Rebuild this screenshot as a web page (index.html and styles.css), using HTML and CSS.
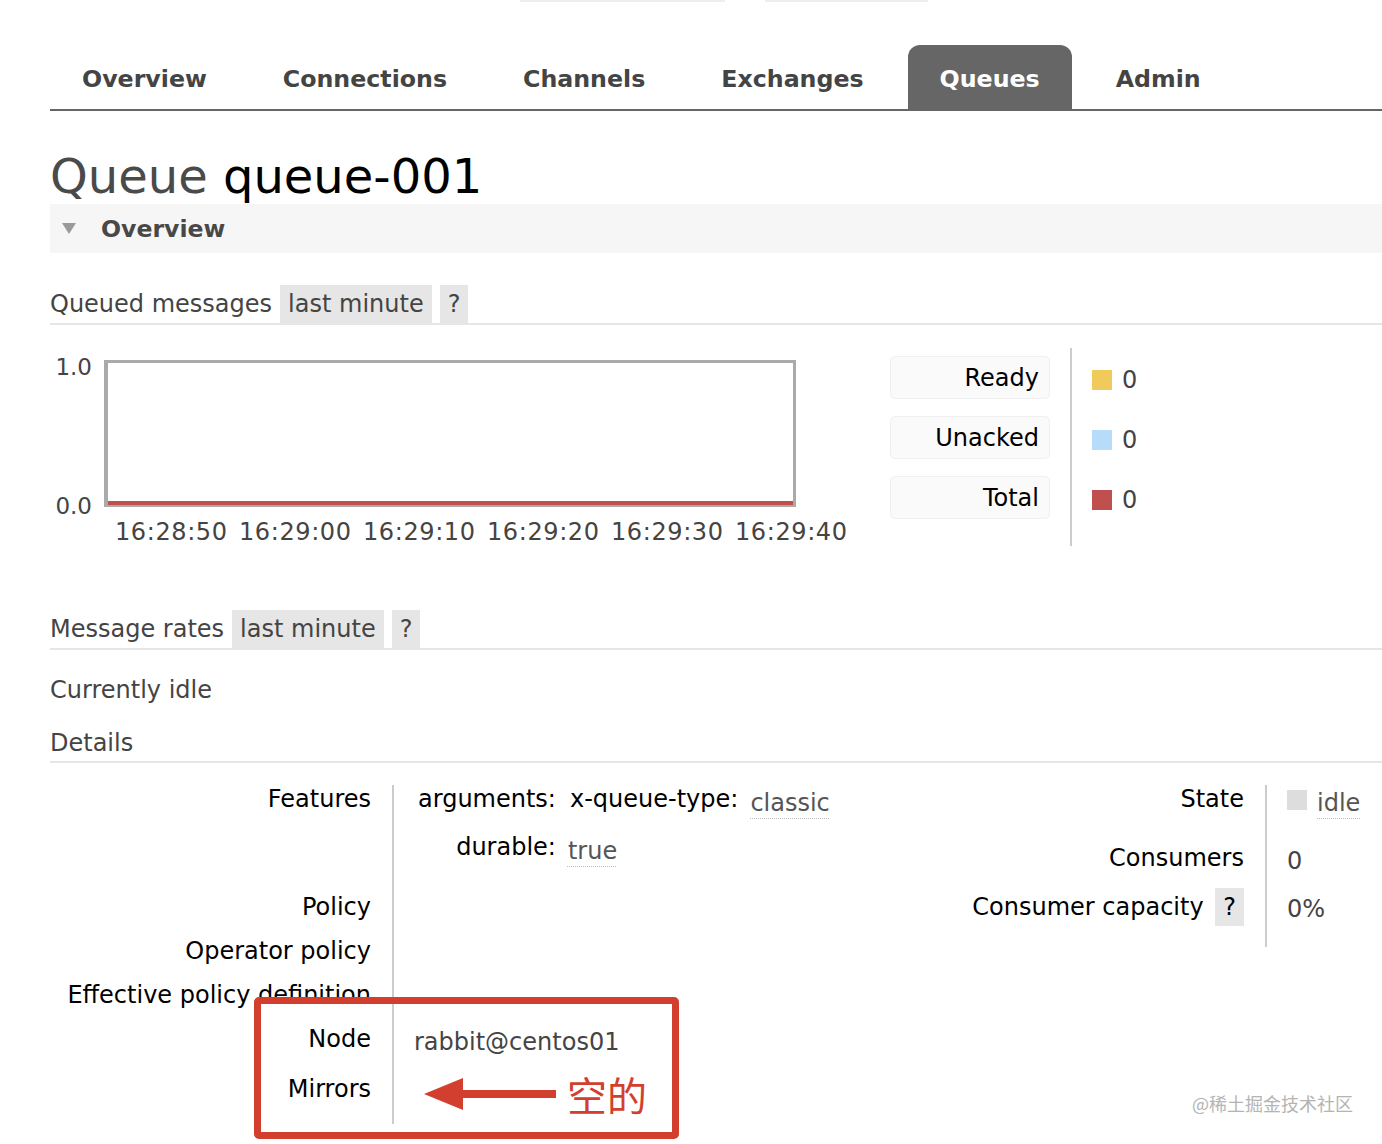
FILE: index.html
```html
<!DOCTYPE html>
<html lang="en">
<head>
<meta charset="utf-8">
<title>Queue queue-001</title>
<link rel="stylesheet" href="styles.css">
</head>
<body>
<div class="page">
  <div class="top-remnant"><span class="r1"></span><span class="r2"></span></div>

  <nav class="tabs">
    <a class="tab">Overview</a>
    <a class="tab">Connections</a>
    <a class="tab">Channels</a>
    <a class="tab">Exchanges</a>
    <a class="tab active">Queues</a>
    <a class="tab">Admin</a>
  </nav>

  <h1 class="title"><span class="kind">Queue</span> queue-001</h1>

  <div class="section-head"><span class="tri"></span>Overview</div>

  <div class="subhead">
    <span class="sublabel">Queued messages</span>
    <span class="pill">last minute</span>
    <span class="pill">?</span>
  </div>

  <div class="chart-row">
    <div class="chart">
      <div class="yaxis"><span>1.0</span><span>0.0</span></div>
      <div class="plot"><div class="series"></div></div>
      <div class="xaxis">
        <span>16:28:50</span><span>16:29:00</span><span>16:29:10</span>
        <span>16:29:20</span><span>16:29:30</span><span>16:29:40</span>
      </div>
    </div>
    <div class="legend">
      <div class="legend-keys">
        <div class="key">Ready</div>
        <div class="key">Unacked</div>
        <div class="key">Total</div>
      </div>
      <div class="legend-vals">
        <div class="val"><i class="sw sw-ready"></i>0</div>
        <div class="val"><i class="sw sw-unacked"></i>0</div>
        <div class="val"><i class="sw sw-total"></i>0</div>
      </div>
    </div>
  </div>

  <div class="subhead rates">
    <span class="sublabel">Message rates</span>
    <span class="pill">last minute</span>
    <span class="pill">?</span>
  </div>

  <p class="idle">Currently idle</p>

  <div class="details-head">Details</div>

  <div class="details">
    <table class="kv kv-left">
      <tr class="row-features">
        <th>Features</th>
        <td>
          <table class="facts">
            <tr class="facts-first">
              <th>arguments:</th>
              <td>
                <table class="facts inner">
                  <tr><th>x-queue-type:</th><td><abbr class="v">classic</abbr></td></tr>
                </table>
              </td>
            </tr>
            <tr><th>durable:</th><td><abbr class="v">true</abbr></td></tr>
          </table>
        </td>
      </tr>
      <tr class="row-std"><th>Policy</th><td></td></tr>
      <tr class="row-std"><th>Operator policy</th><td></td></tr>
      <tr class="row-std"><th>Effective policy definition</th><td></td></tr>
      <tr class="row-node"><th>Node</th><td><span class="plain">rabbit@centos01</span></td></tr>
      <tr class="row-last"><th>Mirrors</th><td></td></tr>
    </table>

    <table class="kv kv-right">
      <tr class="row-state"><th>State</th><td><span class="state-box"></span><abbr class="v">idle</abbr></td></tr>
      <tr class="row-cons"><th>Consumers</th><td class="num">0</td></tr>
      <tr class="row-cap"><th>Consumer capacity <span class="pill">?</span></th><td class="num">0%</td></tr>
    </table>
  </div>

  <div class="annot">
    <svg class="arrow" width="425" height="142" viewBox="0 0 425 142" aria-hidden="true">
      <polygon points="170,97 209,81 209,113" fill="#d23f2e"/>
      <rect x="205" y="93" width="97" height="8" fill="#d23f2e"/>
    </svg>
    <span class="annot-text">空的</span>
  </div>

  <div class="watermark">@稀土掘金技术社区</div>
</div>
</body>
</html>
```

FILE: styles.css
```css
* { box-sizing: border-box; }

html, body {
  margin: 0;
  padding: 0;
  background: #fff;
}

body {
  font-family: "DejaVu Sans", Verdana, "Noto Sans CJK SC", sans-serif;
  font-size: 24px;
  line-height: 28px;
  color: #000;
}

.page {
  position: relative;
  padding-left: 50px;
  width: 1382px;
  height: 1144px;
  overflow: hidden;
}

/* faint remnants at very top */
.top-remnant {
  display: flex;
  height: 2px;
  margin-left: 470px;
  gap: 40px;
}
.top-remnant span { display: block; height: 2px; background: #eeeeee; }
.top-remnant .r1 { width: 205px; }
.top-remnant .r2 { width: 163px; }

/* tabs */
.tabs {
  display: flex;
  gap: 12px;
  margin-top: 43px;
  height: 66px;
  border-bottom: 2px solid #666;
}
.tab {
  display: block;
  padding: 3px 32px 0;
  height: 64px;
  line-height: 62px;
  font-size: 23.7px;
  font-weight: bold;
  color: #444;
}
.tab.active {
  background: #666;
  color: #fff;
  border-radius: 12px 12px 0 0;
}

/* title */
.title {
  margin: 37px 0 0;
  font-size: 48px;
  line-height: 56px;
  font-weight: normal;
  color: #000;
}
.title .kind { color: #4a4a4a; }

.section-head {
  display: flex;
  align-items: center;
  height: 49px;
  background: #f6f6f6;
  padding-left: 12px;
  font-size: 23.6px;
  font-weight: bold;
  color: #484848;
}
.tri {
  width: 0;
  height: 0;
  border-left: 7px solid transparent;
  border-right: 7px solid transparent;
  border-top: 11px solid #9a9a9a;
  margin-right: 25px;
}

/* sub headers */
.subhead {
  display: flex;
  gap: 8px;
  margin-top: 32px;
  border-bottom: 2px solid #e6e6e6;
  color: #444;
  font-size: 24px;
  line-height: 38px;
}
.subhead.rates { margin-top: 64px; }
.pill {
  display: inline-block;
  background: #e6e6e6;
  padding: 0 8px;
  line-height: 38px;
  color: #444;
}

/* chart */
.chart-row {
  display: flex;
  margin-top: 23px;
}
.chart {
  display: grid;
  grid-template-columns: 54px 692px;
  grid-template-rows: 147px auto;
  padding-top: 12px;
}
.yaxis {
  display: flex;
  flex-direction: column;
  justify-content: space-between;
  align-items: flex-end;
  padding-right: 12px;
  margin: -7px 0 -13px;
  color: #444;
  font-size: 23px;
}
.plot {
  display: flex;
  align-items: flex-end;
  border: 3px solid #aaa;
  border-left-width: 4px;
  border-bottom-width: 2px;
  background: #fff;
}
.series {
  width: 100%;
  height: 4px;
  background: #c0504d;
}
.xaxis {
  grid-column: 2;
  display: grid;
  grid-template-columns: repeat(6, 124px);
  padding-left: 11px;
  margin-top: 11px;
  width: 692px;
  color: #444;
  font-size: 24px;
  letter-spacing: 0.6px;
  white-space: nowrap;
}

.legend {
  display: flex;
  margin-left: 94px;
}
.legend-keys {
  display: flex;
  flex-direction: column;
  gap: 17px;
  padding: 8px 20px 8px 0;
  border-right: 2px solid #cccccc;
}
.key {
  width: 160px;
  height: 43px;
  line-height: 43px;
  text-align: right;
  padding-right: 10px;
  background: #fafafa;
  border: 1px solid #f0f0f0;
  border-radius: 5px;
}
.legend-vals {
  display: flex;
  flex-direction: column;
  gap: 17px;
  padding: 8px 0 8px 20px;
}
.val {
  display: flex;
  align-items: center;
  height: 43px;
  padding-top: 4px;
  color: #444;
  font-size: 24px;
}
.sw {
  display: inline-block;
  width: 20px;
  height: 20px;
  margin-right: 10px;
}
.sw-ready { background: #edc240; opacity: 0.85; }
.sw-unacked { background: #afd8f8; opacity: 0.9; }
.sw-total { background: #c0504d; }

.idle {
  margin: 26px 0 0;
  color: #444;
  font-size: 24px;
}
.details-head {
  margin-top: 25px;
  padding-bottom: 4px;
  border-bottom: 2px solid #e6e6e6;
  color: #444;
  font-size: 24px;
}

/* details tables */
.details {
  display: flex;
  align-items: flex-start;
  margin-top: 22px;
}
.kv {
  border-collapse: collapse;
}
.kv > tbody > tr > th,
.kv > tbody > tr > td {
  vertical-align: top;
  padding: 0 0 16px 0;
}
.kv > tbody > tr > th {
  text-align: right;
  font-weight: normal;
  white-space: nowrap;
  padding-right: 21px;
}
.kv > tbody > tr > td {
  border-left: 2px solid #cccccc;
  padding-left: 20px;
}
.kv-left > tbody > tr > th { width: 343px; }
.kv-left > tbody > tr > td { width: 420px; padding-left: 24px; }

.kv > tbody > tr.row-features > th,
.kv > tbody > tr.row-features > td { padding-bottom: 32px; }
.kv > tbody > tr.row-node > th,
.kv > tbody > tr.row-node > td { padding-bottom: 19px; }
.kv > tbody > tr.row-last > th,
.kv > tbody > tr.row-last > td { padding-bottom: 21px; }

.facts {
  border-collapse: collapse;
}
.facts th, .facts td {
  padding: 0;
  vertical-align: top;
  white-space: nowrap;
}
.facts th {
  text-align: right;
  font-weight: normal;
  padding-right: 12px;
}
.facts > tbody > tr.facts-first > th,
.facts > tbody > tr.facts-first > td { padding-bottom: 20px; }
.facts.inner { margin-left: 2px; }
.facts.inner th { padding-right: 12px; }

abbr.v {
  color: #555;
  line-height: 20px;
  vertical-align: -4px;
  text-decoration: underline dotted #bbbbbb;
  text-decoration-thickness: 1px;
  text-underline-offset: 7px;
}
.plain {
  color: #444;
  display: inline-block;
  padding-top: 3px;
  margin-left: -4px;
}

.kv-right {
  margin-left: auto;
}
.kv-right > tbody > tr > td { width: 116px; }
.kv > tbody > tr.row-state > th,
.kv > tbody > tr.row-state > td { padding-bottom: 31px; }
.kv > tbody > tr.row-cons > th,
.kv > tbody > tr.row-cons > td { padding-bottom: 13px; }
.kv > tbody > tr.row-cap > th,
.kv > tbody > tr.row-cap > td { padding-bottom: 19px; line-height: 38px; }
.kv-right .pill { margin-left: 4px; color: #000; }
.kv-right td.num { color: #444; font-size: 24px; padding-top: 3px; }
.kv-right tr.row-cap td.num { padding-top: 2px; }
.state-box {
  display: inline-block;
  width: 20px;
  height: 20px;
  background: #dddddd;
  margin-right: 10px;
  vertical-align: -3px;
}

/* annotation overlay */
.annot {
  position: absolute;
  left: 254px;
  top: 997px;
  width: 425px;
  height: 142px;
  border: 7px solid #d23f2e;
  border-radius: 5px;
}
.arrow {
  position: absolute;
  left: -7px;
  top: -7px;
}
.annot-text {
  position: absolute;
  left: 306px;
  top: 70px;
  font-family: "Noto Sans CJK SC", sans-serif;
  font-size: 40px;
  line-height: 40px;
  color: #d23f2e;
  white-space: nowrap;
}

.watermark {
  position: absolute;
  left: 1192px;
  top: 1090px;
  font-family: "Noto Sans CJK SC", sans-serif;
  font-size: 18px;
  line-height: 26px;
  color: #b4b4b4;
  white-space: nowrap;
}
```
